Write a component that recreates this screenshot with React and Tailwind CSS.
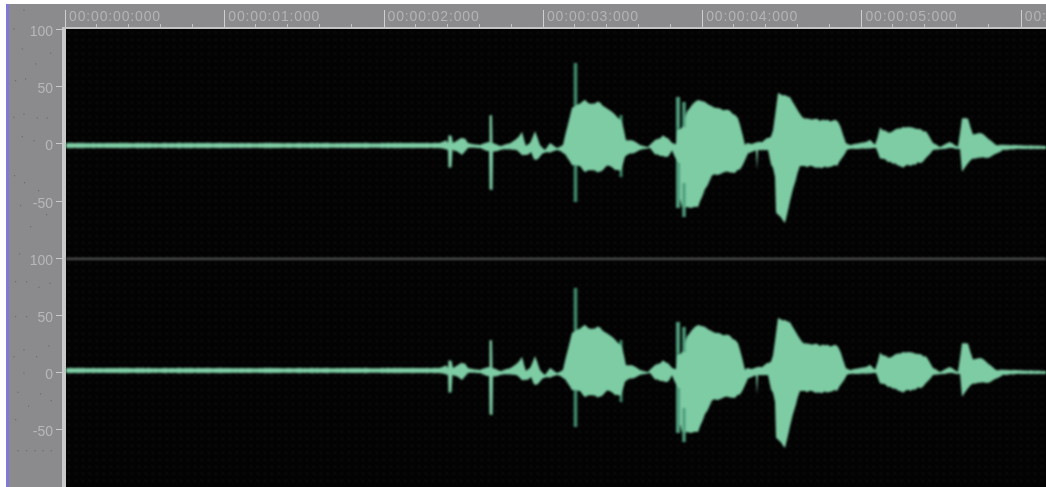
const top1 = [[66,143],[300,143],[440,143],[446,140],[448,143],[448.5,135],[451.5,135],[453,143],[458,140],[461,137],[465,139],[468,143],[480,145],[488,142],[489.5,142],[489.5,115],[492,115],[492.5,143],[501,146],[510,143],[518,138],[522,132],[526,146],[530,143],[535,130],[540,145],[545,150],[550,143],[557,148],[563,145],[567,128],[572,108],[580,104],[585,100],[590,103],[600,102],[606,108],[612,111],[618,118],[622,122],[626,140],[632,140],[640,145],[648,147],[655,140],[663,136],[668,138],[672,143],[676,144],[677,130],[682,128],[687,112],[696,100],[704,101],[716,108],[730,111],[738,118],[745,145],[747,143],[752,144],[758,142],[762,142],[767,138],[771,136],[773,130],[778,93],[785,95],[790,98],[803,118],[820,120],[838,121],[846,143],[850,145],[866,142],[870,140],[875,145],[880,128],[888,133],[908,126],[926,132],[933,143],[940,147],[950,142],[958,147],[962,118],[968,118],[973,135],[983,133],[996,145],[1016,145],[1046,146]];
const bot1 = [[1046,149],[1016,149],[1003,150],[990,157],[973,158],[962,172],[960,149],[950,148],[933,150],[923,162],[903,167],[880,158],[876,148],[850,149],[847,150],[837,165],[817,168],[800,165],[793,190],[785,223],[776,212],[775,177],[773,168],[771,165],[768,150],[758,150],[757,170],[756,150],[748,153],[740,170],[735,172],[722,173],[712,175],[705,190],[698,207],[690,208],[682,207],[680,200],[679,165],[672,150],[668,157],[655,155],[650,148],[640,150],[625,156],[621,170],[615,170],[607,165],[600,172],[590,171],[585,172],[578,165],[572,165],[563,152],[557,150],[548,153],[542,153],[537,160],[534,160],[531,153],[522,155],[517,150],[505,149],[493,152],[492.5,190],[489.5,190],[489,152],[480,148],[468,148],[462,155],[459,152],[452.5,150],[451.5,168],[448.5,168],[448,150],[440,148],[300,148],[66,148]];

function jitter(list, sign) {
  const out = [];
  for (let i = 0; i < list.length - 1; i++) {
    const [x0, y0] = list[i];
    const [x1, y1] = list[i + 1];
    const steps = Math.max(1, Math.round(Math.abs(x1 - x0) / 2.5));
    for (let s = 0; s < steps; s++) {
      const x = x0 + ((x1 - x0) * s) / steps;
      const y = y0 + ((y1 - y0) * s) / steps;
      const height = Math.abs(y - 145.5);
      const amp = height > 6 ? 1.1 : 0.3;
      const n = Math.sin(x * 12.9898) * 43758.5453;
      out.push([x, y + sign * amp * (n - Math.floor(n) - 0.5) * 2]);
    }
  }
  out.push(list[list.length - 1]);
  return out;
}
const points = [...jitter(top1, 1), ...jitter(bot1, -1)]
  .map(([x, y]) => `${x.toFixed(1)},${y.toFixed(1)}`)
  .join(" ");
const spikes = [[575.5,63,202,3.5],[621,115,177,3],[678,97,208,4],[684,102,217,3]];
const streaks = [[678,97,127,4],[684,102,127,3],[678,163,208,4],[684,183,217,3]];

const times = ["00:00:00:000","00:00:01:000","00:00:02:000","00:00:03:000","00:00:04:000","00:00:05:000","00:00:06:000"];
const rows = ["100","50","0","-50","100","50","0","-50"];
const specksTop = [[70,28],[40,85],[150,105],[65,145],[150,158],[105,190],[75,235],[45,240],[70,340],[40,350],[110,352],[140,352],[65,408],[100,420],[145,420]];
const specksLow = [[57,40],[45,123],[78,123],[115,140],[148,128],[45,228],[78,228],[145,316],[70,328],[40,348],[108,348],[70,398],[52,455],[120,460],[152,480],[84,497],[45,537],[52,630],[78,630],[103,630],[127,630],[152,630]];
const specks = [
  ...specksTop.map(([x, y]) => [x / 3, y / 3]),
  ...specksLow.map(([x, y]) => [x / 3, 240 + y / 3]),
  [14, 175],[24, 182],[38, 190],[20, 205],[46, 214],[30, 226],
];

function Wave({ y }) {
  return (
    <g transform={`translate(-66 ${y})`}>
      {spikes.map(([x, a, b, w]) => (
        <rect key={x} x={x - w / 2} y={a} width={w} height={b - a} fill="#3f8d6c" />
      ))}
      <polygon points={points} fill="#7dcca4" />
      {streaks.map(([x, a, b, w]) => (
        <rect key={`${x}-${a}`} x={x - w / 2} y={a} width={w} height={b - a} fill="#4f9d7c" />
      ))}
    </g>
  );
}

export default function App() {
  return (
    <div className="flex h-[487px] w-[1046px] overflow-hidden bg-white font-['Liberation_Sans',sans-serif]">
      <div className="w-[6px] shrink-0 bg-white" />
      <div className="mt-[4px] relative w-[56px] shrink-0 border-l-[3px] border-[#8079d8] bg-[#8b8a8c]">
        <svg className="absolute -left-[3px] top-0 h-[483px] w-[56px]" viewBox="6 4 56 483">
          {specks.map(([x, y]) => (
            <rect key={`${x}-${y}`} x={x} y={y} width="1.2" height="1.2" fill="#6d6c6e" />
          ))}
        </svg>
        <div className="relative -mt-[3px] flex flex-col items-end">
          {rows.map((r, i) => (
            <div key={i} className="flex h-[57.2px] items-center">
              <span className="mr-[3px] mt-[3px] text-[14px] leading-[14px] text-[#b8b8b8] blur-[0.7px]">{r}</span>
              <i className="h-px w-[6px] bg-[#cbcbcb]" />
            </div>
          ))}
        </div>
      </div>
      <div className="flex min-w-0 flex-1 flex-col pt-[4px]">
        <div className="flex h-[23px] shrink-0 bg-[#8b8a8c] pl-[3px] pt-[6px]">
          {times.map((t) => (
            <div key={t} className="relative h-full w-[159.3px] shrink-0 border-l border-[#d0d0d0]">
              <span className="block whitespace-nowrap pl-[3px] text-[14px] leading-[12px] tracking-[0.85px] text-[#b4b4b4] blur-[0.7px]">{t}</span>
              <div className="absolute bottom-0 left-[30px] flex gap-[31px]">
                <i className="h-[3px] w-px bg-[#c4c4c4]" />
                <i className="h-[3px] w-px bg-[#c4c4c4]" />
                <i className="h-[3px] w-px bg-[#c4c4c4]" />
                <i className="h-[3px] w-px bg-[#c4c4c4]" />
              </div>
            </div>
          ))}
        </div>
        <div className="flex min-h-0 flex-1 border-t-2 border-[#c4c4c4]">
          <div className="w-[4px] shrink-0 bg-[#c9c9c9]" />
          <div className="min-w-0 flex-1 bg-[#030303]">
            <svg className="block h-[458px] w-[980px] blur-[0.8px]" viewBox="0 0 980 458">
              <defs>
                <pattern id="grid" width="7" height="7" patternUnits="userSpaceOnUse">
                  <rect x="2" y="3" width="1.5" height="1.5" fill="#1c1c1c" />
                  <rect x="5.5" y="6.5" width="1" height="1" fill="#161616" />
                </pattern>
              </defs>
              <rect width="980" height="458" fill="url(#grid)" />
              <rect y="229" width="980" height="1.6" fill="#6a6f6c" />
              <Wave y={-29} />
              <Wave y={196} />
            </svg>
          </div>
        </div>
      </div>
    </div>
  );
}
